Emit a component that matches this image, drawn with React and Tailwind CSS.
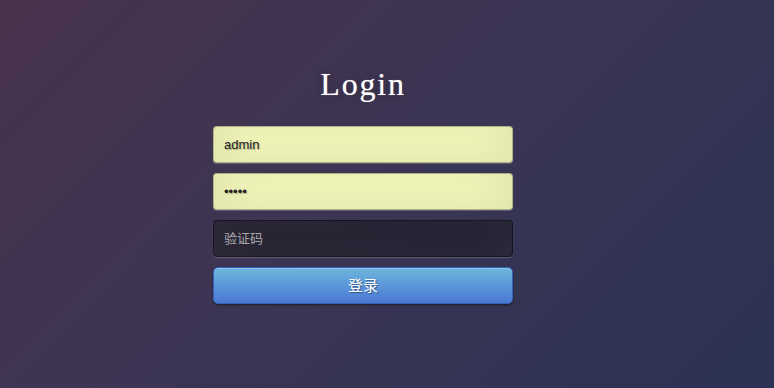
export default function App() {
  const inputBase =
    "block w-full h-[37px] px-[10px] rounded-[4px] border border-[rgba(0,0,0,0.3)] outline-none text-[13px] [font-family:'Liberation_Sans','Noto_Sans_CJK_SC',sans-serif] shadow-[inset_0_-5px_45px_rgba(100,100,100,0.2),0_1px_1px_rgba(255,255,255,0.2)]";
  return (
    <div className="w-full h-[388px] overflow-hidden bg-[linear-gradient(135deg,#48324c_0%,#3c3553_45%,#2b3254_100%)]">
      <div className="w-[300px] ml-[213px] pt-[68px] flex flex-col">
        <h1 className="text-center text-white text-[32px] leading-[32px] tracking-[1.8px] [font-family:'Liberation_Serif',serif] [text-shadow:0_0_10px_rgba(0,0,0,0.3),0_0_1px_rgba(255,255,255,0.6)] mb-[26px]">
          Login
        </h1>
        <input
          type="text"
          readOnly
          defaultValue="admin"
          className={inputBase + " bg-[#fbffbf] text-[#222] [text-shadow:1px_1px_1px_rgba(0,0,0,0.3)] mb-[10px]"}
        />
        <input
          type="password"
          readOnly
          defaultValue="admin"
          className={inputBase + " bg-[#fbffbf] text-[#222] [text-shadow:1px_1px_1px_rgba(0,0,0,0.3)] mb-[10px]"}
        />
        <input
          type="text"
          placeholder="验证码"
          className={inputBase + " bg-[rgba(0,0,0,0.42)] text-white placeholder:text-[#a9a9a9] mb-[10px]"}
        />
        <button
          type="button"
          className="block w-full h-[37px] rounded-[5px] border border-[#3762bc] bg-[#4a77d4] bg-[linear-gradient(to_bottom,#6eb6de,#4a77d4)] text-white text-[15px] [font-family:'Noto_Sans_CJK_SC',sans-serif] [text-shadow:1px_1px_1px_rgba(0,0,0,0.4)] shadow-[inset_0_1px_0_rgba(255,255,255,0.2),0_1px_2px_rgba(0,0,0,0.5)]"
        >
          登录
        </button>
      </div>
    </div>
  );
}
